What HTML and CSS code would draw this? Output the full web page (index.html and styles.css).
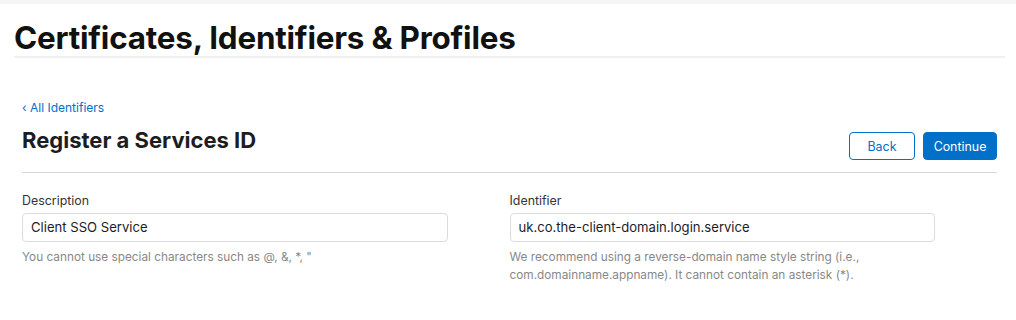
FILE: index.html
```html
<!DOCTYPE html>
<html>
<head>
<meta charset="utf-8">
<link rel="stylesheet" href="styles.css">
</head>
<body>
<div class="topband"></div>
<header class="page-header">
  <h1 class="page-title">Certificates, Identifiers &amp; Profiles</h1>
</header>
<main class="content">
  <a class="back-link" href="#">‹ All Identifiers</a>
  <div class="title-row">
    <h2 class="section-title">Register a Services ID</h2>
    <div class="actions">
      <button class="btn btn-secondary">Back</button>
      <button class="btn btn-primary">Continue</button>
    </div>
  </div>
  <div class="form-grid">
    <div class="field">
      <label class="field-label">Description</label>
      <div class="input">Client SSO Service</div>
      <p class="hint">You cannot use special characters such as @, &amp;, *, "</p>
    </div>
    <div class="field">
      <label class="field-label">Identifier</label>
      <div class="input">uk.co.the-client-domain.login.service</div>
      <p class="hint">We recommend using a reverse-domain name style string (i.e., com.domainname.appname). It cannot contain an asterisk (*).</p>
    </div>
  </div>
</main>
</body>
</html>
```
FILE: styles.css
```css
* { box-sizing: border-box; }
html, body { margin: 0; padding: 0; background: #fff; }
body {
  font-family: Inter, "Helvetica Neue", "Liberation Sans", sans-serif;
  color: #1d1d1f;
  width: 1016px;
  height: 320px;
  overflow: hidden;
}
.topband { height: 4px; background: #f5f5f7; }
.page-header {
  margin: 0 11px 0 14px;
  border-bottom: 2px solid #f0f0f0;
  padding-top: 17px;
  height: 54px;
}
.page-title {
  margin: 0;
  font-size: 31.4px;
  line-height: 34px;
  font-weight: 700;
  letter-spacing: -0.2px;
  color: #111;
}
.content { padding: 42px 19px 0 22px; }
.back-link {
  display: block;
  font-size: 12px;
  line-height: 16px;
  color: #0070c9;
  text-decoration: none;
}
.title-row {
  display: flex;
  justify-content: space-between;
  align-items: flex-start;
  margin-top: 9px;
  padding-bottom: 12px;
  border-bottom: 1px solid #d6d6d6;
}
.section-title {
  margin: 0;
  font-size: 22px;
  line-height: 30px;
  font-weight: 700;
  color: #1d1d1f;
}
.actions { display: flex; gap: 8px; margin-top: 7px; }
.btn {
  font-family: inherit;
  font-size: 12.4px;
  height: 28px;
  border-radius: 4px;
  padding: 0;
  cursor: pointer;
}
.btn-secondary {
  width: 66px;
  background: #fff;
  color: #0070c9;
  border: 1px solid #0070c9;
}
.btn-primary {
  width: 74px;
  background: #0070c9;
  color: #fff;
  border: 1px solid #0070c9;
}
.form-grid {
  display: grid;
  grid-template-columns: 1fr 1fr;
  margin-top: 19px;
}
.field { padding-right: 62px; }
.field-label {
  display: block;
  font-size: 12.4px;
  line-height: 17px;
  color: #333;
  margin-bottom: 4px;
}
.input {
  height: 29px;
  border: 1px solid #dcdcdc;
  border-radius: 4px;
  padding: 0 8px;
  font-size: 13.1px;
  line-height: 27px;
  color: #1d1d1f;
}
.hint {
  margin: 6px 0 0;
  font-size: 11.8px;
  line-height: 18px;
  color: #888;
}
```
